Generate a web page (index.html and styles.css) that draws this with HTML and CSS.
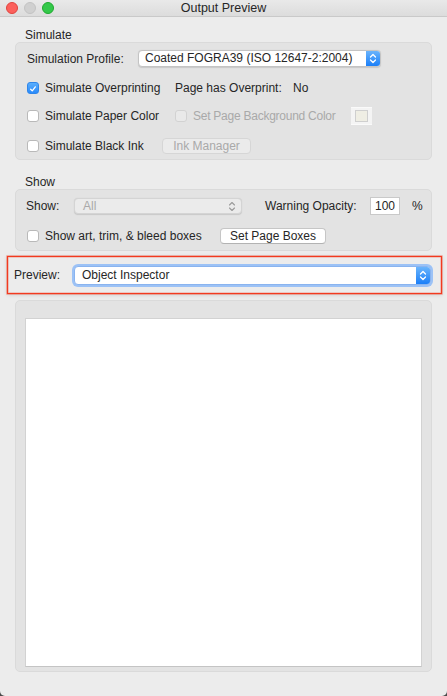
FILE: index.html
```html
<!DOCTYPE html>
<html lang="en">
<head>
    <meta charset="UTF-8">
    <meta name="viewport" content="width=device-width, initial-scale=1.0">
    <title>Output Preview</title>
    <link rel="stylesheet" href="styles.css">
</head>
<body>
<div class="window">
    <div class="titlebar">
        <div class="lights">
            <span class="light red"></span>
            <span class="light idle"></span>
            <span class="light green"></span>
        </div>
        <div class="title">Output Preview</div>
    </div>

    <div class="content">
        <div class="group-title">Simulate</div>
        <div class="group simulate">
            <div class="row row-profile">
                <span class="label profile-label">Simulation Profile:</span>
                <div class="popup popup-profile">
                    <span class="popup-text">Coated FOGRA39 (ISO 12647-2:2004)</span>
                    <span class="popup-arrow">
                        <svg width="8" height="11" viewBox="0 0 8 11"><path d="M1.5 4 L4 1.5 L6.5 4 M1.5 7 L4 9.5 L6.5 7" fill="none" stroke="#fff" stroke-width="1.3" stroke-linecap="round" stroke-linejoin="round"/></svg>
                    </span>
                </div>
            </div>

            <div class="row row-overprint">
                <label class="check-item first-col">
                    <span class="checkbox checked">
                        <svg width="12" height="12" viewBox="0 0 12 12"><path d="M3.2 6.3 L5.1 8.3 L8.8 3.4" fill="none" stroke="#fff" stroke-width="1.5" stroke-linecap="round" stroke-linejoin="round"/></svg>
                    </span>
                    <span class="label">Simulate Overprinting</span>
                </label>
                <span class="label overprint-label">Page has Overprint:</span>
                <span class="label overprint-value">No</span>
            </div>

            <div class="row row-paper">
                <label class="check-item first-col">
                    <span class="checkbox"></span>
                    <span class="label">Simulate Paper Color</span>
                </label>
                <label class="check-item disabled bg-item">
                    <span class="checkbox"></span>
                    <span class="label">Set Page Background Color</span>
                </label>
                <span class="color-well"><span class="swatch"></span></span>
            </div>

            <div class="row row-black">
                <label class="check-item first-col black-col">
                    <span class="checkbox"></span>
                    <span class="label">Simulate Black Ink</span>
                </label>
                <button class="push disabled ink-btn">Ink Manager</button>
            </div>
        </div>

        <div class="group-title show-title">Show</div>
        <div class="group show">
            <div class="row row-show">
                <span class="label show-label">Show:</span>
                <div class="popup popup-show disabled">
                    <span class="popup-text">All</span>
                    <span class="popup-arrow plain">
                        <svg width="8" height="11" viewBox="0 0 8 11"><path d="M1.5 4 L4 1.5 L6.5 4 M1.5 7 L4 9.5 L6.5 7" fill="none" stroke="#9a9a9a" stroke-width="1.1" stroke-linecap="round" stroke-linejoin="round"/></svg>
                    </span>
                </div>
                <span class="label opacity-label">Warning Opacity:</span>
                <span class="field">100</span>
                <span class="label percent">%</span>
            </div>
            <div class="row row-boxes">
                <label class="check-item boxes-col">
                    <span class="checkbox"></span>
                    <span class="label">Show art, trim, &amp; bleed boxes</span>
                </label>
                <button class="push boxes-btn">Set Page Boxes</button>
            </div>
        </div>

        <div class="highlight">
            <span class="label preview-label">Preview:</span>
            <div class="popup popup-preview focused">
                <span class="popup-text">Object Inspector</span>
                <span class="popup-arrow">
                    <svg width="8" height="11" viewBox="0 0 8 11"><path d="M1.5 4 L4 1.5 L6.5 4 M1.5 7 L4 9.5 L6.5 7" fill="none" stroke="#fff" stroke-width="1.3" stroke-linecap="round" stroke-linejoin="round"/></svg>
                </span>
            </div>
        </div>

        <div class="group preview-group">
            <div class="canvas"></div>
        </div>
    </div>
</div>
</body>
</html>
```

FILE: styles.css
```css
html {
    background: #4a4a4a;
}
body {
    margin: 0;
    font-family: "Liberation Sans", Arial, sans-serif;
    font-size: 12px;
    color: #262626;
}
.window {
    width: 447px;
    height: 696px;
    background-color: #ececec;
    border-radius: 0 0 5px 5px;
    overflow: hidden;
    display: flex;
    flex-direction: column;
}

/* title bar */
.titlebar {
    position: relative;
    height: 16px;
    background: linear-gradient(#e9e9e9, #dcdcdc);
    border-bottom: 1px solid #c9c9c9;
}
.lights {
    display: flex;
    gap: 6px;
    padding: 2px 0 0 6px;
}
.light {
    width: 12px;
    height: 12px;
    border-radius: 50%;
    box-sizing: border-box;
}
.light.red {
    background: #fc605c;
    border: 1px solid #e0443e;
}
.light.idle {
    background: #d0d0d0;
    border: 1px solid #c3c3c3;
}
.light.green {
    background: #34c84a;
    border: 1px solid #1fa92f;
}
.title {
    position: absolute;
    left: 0;
    right: 0;
    top: 1px;
    text-align: center;
    font-size: 12.5px;
    color: #262626;
}

/* content */
.content {
    padding: 11px 15px 0 15px;
    display: flex;
    flex-direction: column;
}
.group-title {
    margin-left: 10px;
    line-height: 14px;
    height: 14px;
}
.show-title {
    margin-top: 15px;
}
.group {
    background-color: #e3e3e3;
    border: 1px solid #dadada;
    border-radius: 5px;
    box-sizing: border-box;
}
.row {
    display: flex;
    align-items: center;
}
.label {
    white-space: nowrap;
}

/* simulate group */
.simulate {
    height: 118px;
    padding: 7px 0 0 11px;
}
.row-profile {
    height: 17px;
}
.profile-label {
    width: 111px;
}
.row-overprint {
    height: 20px;
    margin-top: 11px;
}
.row-paper {
    height: 20px;
    margin-top: 8px;
}
.row-black {
    height: 20px;
    margin-top: 10px;
}
.first-col {
    width: 148px;
}
.black-col {
    width: 135px;
}
.overprint-label {
    width: 118px;
}
.bg-item {
    width: 176px;
    gap: 5px;
}
.bg-item .label {
    letter-spacing: -0.25px;
}

/* checkboxes */
.check-item {
    display: flex;
    align-items: center;
    gap: 6px;
}
.checkbox {
    width: 12px;
    height: 12px;
    box-sizing: border-box;
    border: 1px solid #b9b9b9;
    border-radius: 3px;
    background: #fff;
    display: flex;
    flex-shrink: 0;
}
.checkbox.checked {
    background: linear-gradient(#5aaefc, #2a8bfb);
    border-color: #2f86ea;
}
.check-item.disabled .checkbox {
    background: #e9e9e9;
    border-color: #d2d2d2;
}
.check-item.disabled .label {
    color: #a9a9a9;
}
.color-well {
    width: 21px;
    height: 18px;
    box-sizing: border-box;
    background: #f4f4f4;
    border-top: 1px solid #fafafa;
    border-bottom: 1px solid #fafafa;
    display: flex;
    align-items: center;
    justify-content: center;
}
.swatch {
    width: 13px;
    height: 12px;
    box-sizing: border-box;
    background: #efeee4;
    border: 1px solid #cfcfcf;
}

/* push buttons */
.push {
    font: inherit;
    color: #262626;
    background: #fff;
    border: 1px solid #c6c6c6;
    border-bottom-color: #b3b3b3;
    border-radius: 4px;
    padding: 0;
    height: 16px;
    line-height: 13px;
}
.push.disabled {
    background: #ebebeb;
    color: #a9a9a9;
    border-color: #d6d6d6;
}
.ink-btn {
    width: 89px;
}
.boxes-btn {
    width: 106px;
}

/* popups */
.popup {
    display: flex;
    align-items: stretch;
    background: #fff;
    border: 1px solid #c4c4c4;
    border-radius: 4px;
    box-sizing: border-box;
    overflow: hidden;
    box-shadow: 0 0.5px 1px rgba(0, 0, 0, 0.12);
}
.popup-text {
    flex: 1;
    padding-left: 6px;
    line-height: 15px;
    white-space: nowrap;
}
.popup-arrow {
    width: 14px;
    background: linear-gradient(#6ab4fc, #1b7ff8);
    display: flex;
    align-items: center;
    justify-content: center;
}
.popup-arrow.plain {
    background: none;
    width: 18px;
}
.popup-profile {
    width: 243px;
    height: 17px;
}
.popup-show {
    width: 168px;
    height: 16px;
}
.popup.disabled {
    background: #ebebeb;
    border-color: #d4d4d4;
}
.popup.disabled .popup-text {
    color: #a9a9a9;
    padding-left: 8px;
    line-height: 14px;
}

/* show group */
.show {
    height: 62px;
    padding: 7px 0 0 10px;
}
.row-show {
    height: 18px;
}
.show-label {
    width: 48px;
}
.opacity-label {
    margin-left: 23px;
    width: 105px;
}
.field {
    width: 30px;
    height: 18px;
    box-sizing: border-box;
    background: #fff;
    border: 1px solid #c9c9c9;
    padding-left: 4px;
    line-height: 16px;
}
.percent {
    margin-left: 12px;
}
.row-boxes {
    height: 18px;
    margin-top: 12px;
}
.boxes-col {
    width: 193px;
    margin-left: 1px;
}

/* highlighted preview row */
.highlight {
    margin: 5px -10px 0 -8px;
    height: 38px;
    box-sizing: border-box;
    border: 1px solid #f23a1f;
    box-shadow: 0 0 0 0.6px rgba(242, 58, 31, 0.55), inset 0 0 0 0.6px rgba(242, 58, 31, 0.4), 0 1px 4px rgba(0, 0, 0, 0.12);
    display: flex;
    align-items: center;
    padding-left: 6px;
}
.preview-label {
    width: 60px;
}
.popup-preview {
    width: 357px;
    height: 19px;
}
.popup.focused {
    border-color: #8ab4ef;
    box-shadow: 0 0 0 2px #9cc2f6;
}
.popup-preview .popup-text {
    line-height: 17px;
    padding-left: 7px;
}

/* preview area */
.preview-group {
    margin-top: 6px;
    height: 372px;
    padding: 17px 9px 0 9px;
}
.canvas {
    height: 349px;
    background: #fff;
    border: 1px solid #d2d2d2;
    border-bottom-color: #c4c4c4;
    box-sizing: border-box;
}
```
